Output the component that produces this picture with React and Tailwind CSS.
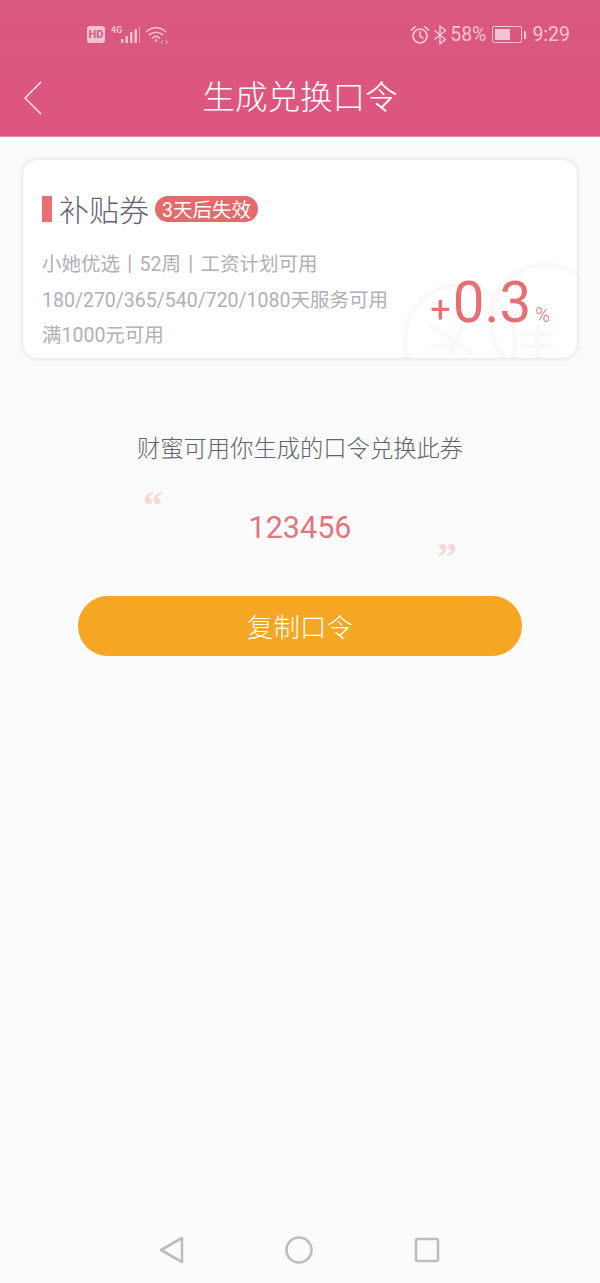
import React from "react";

const FONT = "font-['Roboto','Noto_Sans_CJK_SC',sans-serif]";

const SignalIcon = () => (
  <svg width="20" height="20" viewBox="0 0 20 20" fill="#f3c3d3">
    <rect x="1" y="14" width="2.4" height="4" />
    <rect x="5.5" y="11" width="2.4" height="7" />
    <rect x="10" y="7" width="2.4" height="11" />
    <rect x="14.5" y="4" width="2.4" height="14" />
    <rect x="19" y="1" width="1" height="17" opacity="0.6" />
  </svg>
);

const WifiIcon = () => (
  <svg width="24" height="20" viewBox="0 0 24 20" fill="none" stroke="#f3c3d3" strokeWidth="1.6" strokeLinecap="round">
    <path d="M1.5 6.5C7 1.5 15 1.5 20.5 6.5" />
    <path d="M4.5 9.7C8.3 6.4 13.7 6.4 17.5 9.7" />
    <path d="M7.6 12.8C9.8 11 12.2 11 14.4 12.8" />
    <circle cx="11" cy="15.6" r="1.3" fill="#f3c3d3" stroke="none" />
    <path d="M17.5 15.5l-1.6 1.6 1.6 1.6M21 15.5l1.6 1.6-1.6 1.6" strokeWidth="1" />
  </svg>
);

const AlarmIcon = () => (
  <svg width="20" height="20" viewBox="0 0 20 20" fill="none" stroke="#f3c3d3" strokeWidth="1.7" strokeLinecap="round">
    <circle cx="10" cy="11" r="7" />
    <path d="M10 6.8V11l2.8 2.2" />
    <path d="M1.5 5L5 1.8M18.5 5L15 1.8" />
  </svg>
);

const BluetoothIcon = () => (
  <svg width="14" height="20" viewBox="0 0 14 20" fill="none" stroke="#f3c3d3" strokeWidth="1.5">
    <path d="M1.5 5.5l11 9L7 19V1l5.5 4.5-11 9" />
  </svg>
);

const BatteryIcon = () => (
  <div className="flex items-center gap-[2px]">
    <div className="w-[30px] h-[17px] rounded-[2px] border border-[#f3c3d3] p-[2px]">
      <div className="w-[62%] h-full bg-[#f3c3d3]" />
    </div>
    <div className="w-[2px] h-[8px] bg-[#f3c3d3]" />
  </div>
);

const Watermark = () => (
  <svg
    className="absolute right-0 bottom-0"
    width="176"
    height="96"
    viewBox="0 0 176 96"
    fill="none"
    stroke="#f9f9f9"
    strokeWidth="5"
  >
    <circle cx="59" cy="78" r="55" />
    <circle cx="144" cy="58" r="55" />
    <path d="M28 62l44 30M62 62l-12 30M30 84h24" />
    <path d="M140 62l-8 10M119 72h34M119 84h34M136 72v24" />
  </svg>
);

const App = () => {
  return (
    <div className={`${FONT} w-[600px] h-[1283px] flex flex-col bg-[#fbfbfb]`}>
      {/* status bar + title */}
      <div className="h-[137px] shrink-0 flex flex-col bg-gradient-to-b from-[#d9597f] to-[#de557f] border-b border-[#e28aa6]">
        <div className="h-[69px] flex items-center justify-between pl-[87px] pr-[30px] text-[#f3c3d3]">
          <div className="flex items-center">
            <div className="w-[18px] h-[17px] rounded-[3px] bg-[#f3c3d3] text-[#d9597f] text-[11px] leading-[17px] font-bold text-center">
              HD
            </div>
            <div className="ml-[6px] mb-[9px] text-[9px] leading-[10px] font-bold">4G</div>
            <div className="-ml-[2px]">
              <SignalIcon />
            </div>
            <div className="ml-[5px]">
              <WifiIcon />
            </div>
          </div>
          <div className="flex items-center">
            <AlarmIcon />
            <div className="ml-[3px]">
              <BluetoothIcon />
            </div>
            <span className="ml-[3px] text-[19.5px] leading-[20px]">58%</span>
            <div className="ml-[6px]">
              <BatteryIcon />
            </div>
            <span className="ml-[6px] text-[19.5px] leading-[20px]">9:29</span>
          </div>
        </div>
        <div className="relative h-[67px] flex items-center justify-center">
          <svg className="absolute left-[23px] top-[11px]" width="20" height="36" viewBox="0 0 20 36" fill="none" stroke="#ffffff" strokeWidth="1.2">
            <path d="M18 2L2 18l16 16" />
          </svg>
          <span className="text-white text-[32.5px] leading-[40px] font-light -mt-[9px]">生成兑换口令</span>
        </div>
      </div>

      {/* coupon card */}
      <div className="relative overflow-hidden mx-[23px] mt-[23px] h-[198px] rounded-[14px] bg-white shadow-[0_0_5px_rgba(0,0,0,0.14)] pl-[19px] pt-[36px]">
        <Watermark />
        <div className="relative flex items-center h-[26px]">
          <div className="w-[10px] h-[26px] bg-[#e96f72]" />
          <span className="ml-[7px] mt-[3px] text-[30px] leading-[26px] font-light text-[#5f6470]">补贴券</span>
          <span className="ml-[6px] h-[26px] pt-[3px] px-[7px] rounded-full bg-[#e56a6c] text-white text-[19.5px] leading-[24px]">3天后失效</span>
        </div>
        <div className="relative mt-[25px] text-[19.5px] leading-[36px] text-[#b0b0b7]">
          <div className="h-[36px]">小她优选丨52周丨工资计划可用</div>
          <div className="h-[35px]">180/270/365/540/720/1080天服务可用</div>
          <div className="h-[36px]">满1000元可用</div>
        </div>
        <div className="absolute right-[27px] bottom-[26px] flex items-baseline text-[#e56f72]">
          <span className="text-[36px] leading-[36px]">+</span>
          <span className="text-[56.5px] leading-[58px] ml-[2px]">0.3</span>
          <span className="ml-[4px] text-[20px] leading-[18px] font-light">%</span>
        </div>
      </div>

      {/* token */}
      <div className="mt-[75px] text-center text-[23.3px] leading-[32px] font-light text-[#5f6470]">财蜜可用你生成的口令兑换此券</div>
      <div className="mx-auto mt-[28px] w-[314px] h-[96px] flex justify-between">
        <span className="self-start -mt-[7px] font-['Liberation_Serif',serif] font-bold text-[#fbd6d6] text-[40px] leading-[40px]">“</span>
        <span className="self-start mt-[15px] text-[30.5px] leading-[40px] text-[#e2777b]">123456</span>
        <span className="self-end mb-[12px] font-['Liberation_Serif',serif] font-bold text-[#fbd6d6] text-[40px] leading-[40px]">”</span>
      </div>
      <button className="mx-auto mt-[7px] w-[444px] h-[60px] pt-[4px] rounded-full bg-[#f5a623] text-white text-[26.5px] font-light">复制口令</button>

      {/* android nav */}
      <div className="mt-auto h-[66px] flex items-start justify-between pl-[159px] pr-[160px] pt-[19px]">
        <svg width="25" height="28" viewBox="0 0 25 28" fill="none" stroke="#bdbdbd" strokeWidth="2.6" strokeLinejoin="round">
          <path d="M23 2v24L2 14z" />
        </svg>
        <svg width="28" height="28" viewBox="0 0 28 28" fill="none" stroke="#bdbdbd" strokeWidth="2.6">
          <circle cx="14" cy="14" r="12.5" />
        </svg>
        <svg width="26" height="26" className="mt-[1px]" viewBox="0 0 26 26" fill="none" stroke="#bdbdbd" strokeWidth="2.6" strokeLinejoin="round">
          <rect x="2" y="2" width="22" height="22" rx="1.5" />
        </svg>
      </div>
    </div>
  );
};

export default App;
